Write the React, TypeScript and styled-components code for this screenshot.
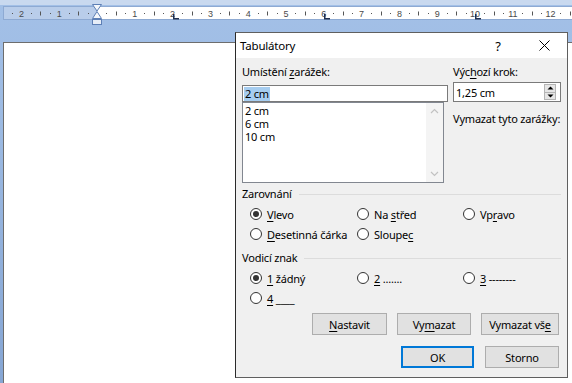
import React from "react";
import styled, { createGlobalStyle } from "styled-components";

const GlobalStyle = createGlobalStyle`
  html, body {
    margin: 0;
    padding: 0;
  }
  body {
    width: 572px;
    height: 383px;
    overflow: hidden;
    font-family: "Noto Sans", "Liberation Sans", sans-serif;
  }
`;

const Screen = styled.div`
  position: relative;
  width: 572px;
  height: 383px;
  overflow: hidden;
  display: flex;
  flex-direction: column;
  background: linear-gradient(to bottom, #a3c0e7 0%, #9dbbe3 30%, #86a6d4 100%);
`;

const RulerSvg = styled.svg`
  display: block;
  flex: none;
`;

const Page = styled.div`
  flex: 1;
  margin: 14px 0 0 3px;
  background: #fff;
  border-top: 1px solid #6d6d6d;
  border-left: 1px solid #6d6d6d;
`;

const Dialog = styled.div`
  position: absolute;
  left: 235px;
  top: 32px;
  width: 333px;
  height: 346px;
  box-sizing: border-box;
  border: 1px solid #5f5f5f;
  border-left-color: #2a2a2a;
  background: #f0f0f0;
  display: flex;
  flex-direction: column;
  font-family: "Noto Sans", "Liberation Sans", sans-serif;
  font-size: 11px;
  letter-spacing: -0.2px;
  color: #000;
`;

const TitleBar = styled.div`
  height: 25px;
  flex: none;
  background: #fff;
  display: flex;
  align-items: center;
  padding-left: 4px;
`;

const Title = styled.div`
  flex: 1;
  font-size: 11.5px;
`;

const CaptionButton = styled.div`
  width: 46px;
  height: 25px;
  display: flex;
  align-items: center;
  justify-content: center;
  font-size: 13px;
`;

const Body = styled.div`
  flex: 1;
  padding: 6px 6px 0 6px;
  display: flex;
  flex-direction: column;
`;

const TopSection = styled.div`
  display: flex;
  gap: 5px;
`;

const Column = styled.div<{ $w: number }>`
  width: ${({ $w }) => $w}px;
  display: flex;
  flex-direction: column;
`;

const FieldLabel = styled.div<{ $mt?: number }>`
  line-height: 15px;
  height: 15px;
  margin-top: ${({ $mt }) => $mt ?? 0}px;
  white-space: nowrap;
`;

const Key = styled.span`
  text-decoration: underline;
  text-underline-offset: 2px;
`;

const TextInput = styled.div`
  margin-top: 6px;
  height: 17px;
  box-sizing: border-box;
  border: 1px solid #7a7a7a;
  background: #fff;
  padding: 0 1px;
  display: flex;
  align-items: center;
`;

const Selected = styled.span`
  background: #a6cdf0;
  line-height: 14px;
  padding: 0 1px;
`;

const ListBox = styled.div`
  width: 202px;
  height: 81px;
  box-sizing: border-box;
  border: 1px solid #828790;
  background: #fff;
  display: flex;
`;

const ListItems = styled.div`
  flex: 1;
  padding: 1px 2px;
  line-height: 13px;
`;

const ScrollBar = styled.div`
  width: 17px;
  background: #f4f4f4;
  display: flex;
  flex-direction: column;
  justify-content: space-between;
  align-items: center;
  padding: 5px 0;
`;

const Spinner = styled.div`
  margin-top: 3px;
  height: 20px;
  box-sizing: border-box;
  border: 1px solid #7a7a7a;
  background: #fff;
  display: flex;
  align-items: center;
`;

const SpinText = styled.div`
  flex: 1;
  padding-left: 2px;
`;

const SpinButtons = styled.div`
  width: 12px;
  height: 16px;
  margin-right: 4px;
  box-sizing: border-box;
  border: 1px solid #b5b5b5;
  display: flex;
  flex-direction: column;
`;

const SpinHalf = styled.div<{ $top?: boolean }>`
  flex: 1;
  background: #e6e6e6;
  border-bottom: ${({ $top }) => ($top ? "1px solid #b5b5b5" : "none")};
  display: flex;
  align-items: center;
  justify-content: center;
`;

const GroupHeader = styled.div<{ $mt: number }>`
  display: flex;
  align-items: center;
  margin-top: ${({ $mt }) => $mt}px;
  line-height: 16px;
`;

const HeaderLine = styled.div`
  flex: 1;
  height: 1px;
  background: #dcdcdc;
  margin-left: 7px;
`;

const RadioGrid = styled.div`
  display: grid;
  grid-template-columns: 107px 106px 1fr;
  grid-auto-rows: 20px;
  padding-left: 8px;
  margin-top: 2px;
`;

const RadioItem = styled.div`
  display: flex;
  align-items: center;
  gap: 5px;
  white-space: nowrap;
`;

const RadioCircle = styled.span<{ $checked?: boolean }>`
  width: 12px;
  height: 12px;
  box-sizing: border-box;
  border-radius: 50%;
  border: 1px solid #333;
  background: #fff;
  display: flex;
  align-items: center;
  justify-content: center;
  &::after {
    content: "";
    width: 6px;
    height: 6px;
    border-radius: 50%;
    background: ${({ $checked }) => ($checked ? "#333" : "transparent")};
  }
`;

const ButtonRow = styled.div<{ $mt: number; $gap: number }>`
  display: flex;
  justify-content: flex-end;
  gap: ${({ $gap }) => $gap}px;
  margin-top: ${({ $mt }) => $mt}px;
  padding-right: 2px;
`;

const Button = styled.div<{ $w: number; $default?: boolean }>`
  width: ${({ $w }) => $w}px;
  height: 22px;
  box-sizing: border-box;
  border: ${({ $default }) => ($default ? "2px solid #0078d7" : "1px solid #adadad")};
  background: #e1e1e1;
  display: flex;
  align-items: center;
  justify-content: center;
`;

const CM = 37.8;
const ORIGIN = 97;

function RulerDrawing() {
  const marks: React.ReactNode[] = [];
  for (let q = -11; q <= 51; q++) {
    if (q % 4 === 0) continue;
    const x = Math.round(ORIGIN + (q * CM) / 4) + 0.5;
    if (x < 5 || x > 571) continue;
    if (Math.abs(q % 4) === 2) {
      marks.push(<line key={q} x1={x} x2={x} y1={11.5} y2={15.5} stroke="#555" />);
    } else {
      marks.push(<rect key={q} x={x - 0.5} y={13} width={1} height={1} fill="#555" />);
    }
  }
  const numbers = [-2, -1, 1, 2, 3, 4, 5, 6, 7, 8, 9, 10, 11, 12];
  const tabs = [2, 6, 10];
  return (
    <RulerSvg width={572} height={28} viewBox="0 0 572 28">
      <rect x={0} y={0} width={572} height={5} fill="#c9d9ef" />
      <rect x={3.5} y={6.5} width={580} height={13} fill="#fff" stroke="#8eaad3" />
      <rect x={4} y={7} width={93} height={12} fill="#b9cdea" />
      {marks}
      {numbers.map((n) => (
        <text
          key={n}
          x={ORIGIN + n * CM}
          y={16.5}
          textAnchor="middle"
          fontSize={9}
          fontFamily="Liberation Sans, sans-serif"
          fill="#4a4a4a"
        >
          {Math.abs(n)}
        </text>
      ))}
      {tabs.map((t) => {
        const x = Math.round(ORIGIN + t * CM);
        return (
          <path key={t} d={`M${x} 14 V19.5 H${x + 6} V18 H${x + 1.5} V14 Z`} fill="#1f2f4f" />
        );
      })}
      <path d="M92.5 4.5 H101.5 L97 11 Z" fill="#f4f7fb" stroke="#5d7fb5" />
      <path d="M97 11.5 L101.5 18.5 H92.5 Z" fill="#f4f7fb" stroke="#5d7fb5" />
      <rect x={92.5} y={19.5} width={9} height={5} fill="#e6edf7" stroke="#5d7fb5" />
    </RulerSvg>
  );
}

function Radio({ checked, children }: { checked?: boolean; children: React.ReactNode }) {
  return (
    <RadioItem>
      <RadioCircle $checked={checked} />
      <span>{children}</span>
    </RadioItem>
  );
}

const Chevron = ({ up }: { up?: boolean }) => (
  <svg width="9" height="6" viewBox="0 0 9 6">
    <path d={up ? "M1 5 L4.5 1.5 L8 5" : "M1 1 L4.5 4.5 L8 1"} fill="none" stroke="#c2c2c2" strokeWidth="1.2" />
  </svg>
);

const SpinArrow = ({ up }: { up?: boolean }) => (
  <svg width="7" height="4" viewBox="0 0 7 4">
    <path d={up ? "M0.5 3.5 L3.5 0.5 L6.5 3.5 Z" : "M0.5 0.5 L3.5 3.5 L6.5 0.5 Z"} fill="#000" />
  </svg>
);

export default function App() {
  return (
    <>
      <GlobalStyle />
      <Screen>
        <RulerDrawing />
        <Page />
        <Dialog>
          <TitleBar>
            <Title>Tabulátory</Title>
            <CaptionButton>?</CaptionButton>
            <CaptionButton>
              <svg width="11" height="11" viewBox="0 0 11 11">
                <path d="M0.5 0.5 L10.5 10.5 M10.5 0.5 L0.5 10.5" stroke="#000" strokeWidth="1" />
              </svg>
            </CaptionButton>
          </TitleBar>
          <Body>
            <TopSection>
              <Column $w={206}>
                <FieldLabel>
                  Umístění <Key>z</Key>arážek:
                </FieldLabel>
                <TextInput>
                  <Selected>2 cm</Selected>
                </TextInput>
                <ListBox>
                  <ListItems>
                    <div>2 cm</div>
                    <div>6 cm</div>
                    <div>10 cm</div>
                  </ListItems>
                  <ScrollBar>
                    <Chevron up />
                    <Chevron />
                  </ScrollBar>
                </ListBox>
              </Column>
              <Column $w={108}>
                <FieldLabel>
                  Výc<Key>h</Key>ozí krok:
                </FieldLabel>
                <Spinner>
                  <SpinText>1,25 cm</SpinText>
                  <SpinButtons>
                    <SpinHalf $top>
                      <SpinArrow up />
                    </SpinHalf>
                    <SpinHalf>
                      <SpinArrow />
                    </SpinHalf>
                  </SpinButtons>
                </Spinner>
                <FieldLabel $mt={9}>Vymazat tyto zarážky:</FieldLabel>
              </Column>
            </TopSection>

            <GroupHeader $mt={3}>
              Zarovnání
              <HeaderLine />
            </GroupHeader>
            <RadioGrid>
              <Radio checked>
                <Key>V</Key>levo
              </Radio>
              <Radio>
                Na <Key>s</Key>třed
              </Radio>
              <Radio>
                Vp<Key>r</Key>avo
              </Radio>
              <Radio>
                <Key>D</Key>esetinná čárka
              </Radio>
              <Radio>
                Sloupe<Key>c</Key>
              </Radio>
            </RadioGrid>

            <GroupHeader $mt={6}>
              Vodicí znak
              <HeaderLine />
            </GroupHeader>
            <RadioGrid>
              <Radio checked>
                <Key>1</Key> žádný
              </Radio>
              <Radio>
                <Key>2</Key> .......
              </Radio>
              <Radio>
                <Key>3</Key> --------
              </Radio>
              <Radio>
                <Key>4</Key> ____
              </Radio>
            </RadioGrid>

            <ButtonRow $mt={5} $gap={10}>
              <Button $w={75}>
                <span>
                  <Key>N</Key>astavit
                </span>
              </Button>
              <Button $w={74}>
                <span>
                  Vy<Key>m</Key>azat
                </span>
              </Button>
              <Button $w={78}>
                <span>
                  Vymazat vš<Key>e</Key>
                </span>
              </Button>
            </ButtonRow>
            <ButtonRow $mt={11} $gap={11}>
              <Button $w={73} $default>
                OK
              </Button>
              <Button $w={74}>Storno</Button>
            </ButtonRow>
          </Body>
        </Dialog>
      </Screen>
    </>
  );
}
